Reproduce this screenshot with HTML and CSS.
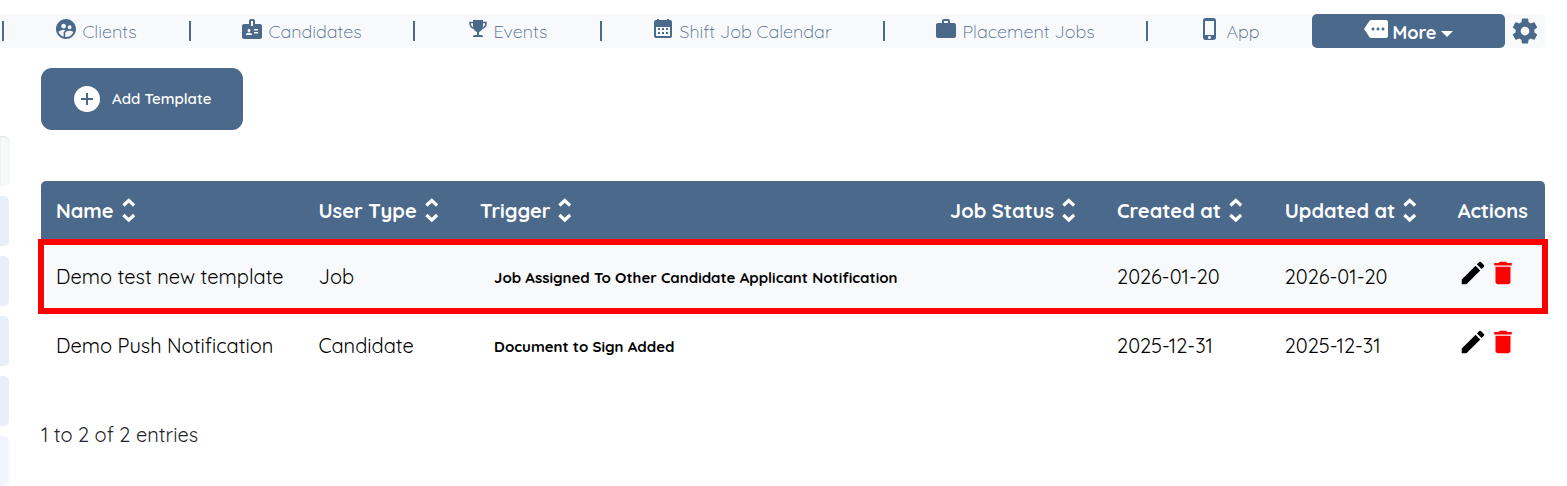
FILE: index.html
```
<!DOCTYPE html>
<html lang="en">
<head>
    <meta charset="UTF-8">
    <meta name="viewport" content="width=device-width, initial-scale=1.0">
    <title>Push Notification Templates</title>
    <link rel="stylesheet" href="styles.css">
</head>
<body>
    <!-- Shared icon shapes -->
    <svg class="icon-defs" aria-hidden="true">
        <symbol id="icon-sort" viewBox="0 0 24 24">
            <path d="M7.5 7.6L11.800 3.600l4.300 4M7.500 15.200l4.300 4 4.300-4" fill="none" stroke="currentColor" stroke-width="2.5"/>
        </symbol>
        <symbol id="icon-edit" viewBox="0 0 24 24">
            <path d="M3 17.25V21h3.75L17.81 9.94l-3.75-3.75L3 17.25zM20.71 7.04a1 1 0 0 0 0-1.41l-2.34-2.34a1 1 0 0 0-1.41 0l-1.83 1.83 3.75 3.75 1.83-1.83z"/>
        </symbol>
        <symbol id="icon-delete" viewBox="0 0 24 24">
            <path d="M6 19c0 1.1.9 2 2 2h8c1.1 0 2-.9 2-2V7H6v12zM19 4h-3.5l-1-1h-5l-1 1H5v2h14V4z"/>
        </symbol>
    </svg>

    <nav class="top-nav">
        <a class="nav-item" href="#">
            <svg class="nav-icon" viewBox="0 0 24 24"><path d="M11.99 2c-5.52 0-10 4.48-10 10s4.48 10 10 10 10-4.48 10-10-4.48-10-10-10zm3.61 6.34c1.07 0 1.93.86 1.93 1.93 0 1.07-.86 1.93-1.93 1.93-1.07 0-1.93-.86-1.93-1.93-.01-1.07.86-1.93 1.93-1.93zm-6-1.58c1.3 0 2.36 1.06 2.36 2.36 0 1.3-1.06 2.36-2.36 2.36s-2.36-1.06-2.36-2.36c0-1.31 1.05-2.36 2.36-2.36zm0 9.13v3.75c-2.4-.75-4.3-2.6-5.14-4.96 1.05-1.12 3.67-1.69 5.14-1.69.53 0 1.2.08 1.9.22-1.64.87-1.9 2.02-1.9 2.68zM11.99 20c-.27 0-.53-.01-.79-.04v-4.07c0-1.42 2.94-2.13 4.4-2.13 1.07 0 2.92.39 3.84 1.15-1.17 2.97-4.06 5.09-7.45 5.09z"/></svg>
            Clients
        </a>
        <a class="nav-item" href="#">
            <svg class="nav-icon" viewBox="0 0 24 24"><path d="M20 7h-5V4c0-1.1-.9-2-2-2h-2c-1.1 0-2 .9-2 2v3H4c-1.1 0-2 .9-2 2v11c0 1.1.9 2 2 2h16c1.1 0 2-.9 2-2V9c0-1.1-.9-2-2-2zM9 12c.83 0 1.5.67 1.5 1.5S9.83 15 9 15s-1.5-.67-1.5-1.5S8.17 12 9 12zm3 6H6v-.75c0-1 2-1.5 3-1.5s3 .5 3 1.5V18zm1-9h-2V4h2v5zm5 7.5h-4V15h4v1.5zm0-3h-4V12h4v1.5z"/></svg>
            Candidates
        </a>
        <a class="nav-item" href="#">
            <svg class="nav-icon" viewBox="0 0 24 24"><path d="M7 3h10v6c0 3.400-2 5.500-4 6v3h2.500a1.500 1.500 0 0 1 1.500 1.500v.5H7v-.5A1.500 1.500 0 0 1 8.500 18H11v-3c-2-.5-4-2.600-4-6z"/><path d="M7.500 5.500H4c0 3.500 1.500 5.500 4.500 6M16.500 5.500H20c0 3.500-1.500 5.500-4.500 6" fill="none" stroke="currentColor" stroke-width="1.600"/></svg>
            Events
        </a>
        <a class="nav-item" href="#">
            <svg class="nav-icon" viewBox="0 0 24 24"><path fill-rule="evenodd" d="M5 3h1V2h2v1h8V2h2v1h1a2 2 0 0 1 2 2v14a2 2 0 0 1-2 2H5a2 2 0 0 1-2-2V5a2 2 0 0 1 2-2zM5 10v9h14v-9z"/><path d="M7 11h2v2H7zM11 11h2v2h-2zM15 11h2v2h-2zM7 15h2v2H7zM11 15h2v2h-2zM15 15h2v2h-2z"/></svg>
            Shift Job Calendar
        </a>
        <a class="nav-item" href="#">
            <svg class="nav-icon" viewBox="0 0 24 24"><path d="M20 6h-4V4c0-1.110-.89-2-2-2h-4c-1.110 0-2 .89-2 2v2H4c-1.110 0-2 .89-2 2v11c0 1.110.89 2 2 2h16c1.110 0 2-.89 2-2V8c0-1.110-.89-2-2-2zm-6 0h-4V4h4v2z"/></svg>
            Placement Jobs
        </a>
        <a class="nav-item" href="#">
            <svg class="nav-icon" viewBox="0 0 24 24"><path d="M15.500 1h-8C6.120 1 5 2.120 5 3.500v17C5 21.880 6.120 23 7.500 23h8c1.380 0 2.500-1.120 2.500-2.500v-17C18 2.120 16.880 1 15.500 1zm-4 21c-.83 0-1.500-.67-1.500-1.500s.67-1.500 1.500-1.500 1.500.67 1.500 1.500-.67 1.500-1.500 1.500zm4.500-4H7V4h9v14z"/></svg>
            App
        </a>
        <button class="more-button" type="button">
            <svg class="nav-icon" viewBox="0 0 24 24"><path d="M22 3H7c-.69 0-1.230.35-1.590.88L0 12l5.410 8.110c.36.53.97.89 1.660.89H22c1.100 0 2-.9 2-2V5c0-1.100-.9-2-2-2zM9 13.500c-.83 0-1.500-.67-1.500-1.500s.67-1.500 1.500-1.500 1.500.67 1.500 1.500-.67 1.500-1.500 1.500zm5 0c-.83 0-1.500-.67-1.500-1.500s.67-1.500 1.500-1.500 1.500.67 1.500 1.500-.67 1.500-1.500 1.500zm5 0c-.83 0-1.500-.67-1.500-1.500s.67-1.500 1.500-1.500 1.500.67 1.500 1.500-.67 1.500-1.500 1.500z"/></svg>
            More
            <span class="caret"></span>
        </button>
        <a class="settings-link" href="#" aria-label="Settings">
            <svg viewBox="0 0 24 24"><path d="M12 15.5A3.5 3.5 0 0 1 8.5 12 3.5 3.5 0 0 1 12 8.5a3.5 3.5 0 0 1 3.5 3.5 3.5 3.5 0 0 1-3.5 3.5m7.43-2.53c.04-.32.07-.64.07-.97 0-.33-.03-.66-.07-1l2.11-1.63c.19-.15.24-.42.12-.64l-2-3.460c-.12-.22-.39-.31-.61-.22l-2.490 1c-.52-.39-1.060-.73-1.690-.98l-.37-2.650A.506.506 0 0 0 14 2h-4c-.25 0-.46.18-.5.42l-.37 2.650c-.63.25-1.170.59-1.690.98l-2.490-1c-.22-.09-.49 0-.61.22l-2 3.460c-.13.22-.07.49.12.64L4.570 11c-.04.34-.07.67-.07 1 0 .33.03.65.07.97l-2.110 1.660c-.19.15-.25.42-.12.64l2 3.460c.12.22.39.3.61.22l2.490-1.010c.52.4 1.060.74 1.690.99l.37 2.650c.04.24.25.42.5.42h4c.25 0 .46-.18.5-.42l.37-2.650c.63-.26 1.170-.59 1.690-.99l2.490 1.010c.22.08.49 0 .61-.22l2-3.460c.12-.22.07-.49-.12-.64l-2.110-1.660z"/></svg>
        </a>
    </nav>

    <div class="page">
        <aside class="sidebar">
            <div class="side-item search"></div>
            <div class="side-item"></div>
            <div class="side-item"></div>
            <div class="side-item"></div>
            <div class="side-item"></div>
            <div class="side-item active"></div>
        </aside>

        <main class="content">
            <button class="add-button" type="button">
                <svg viewBox="0 0 26 26"><circle cx="13" cy="13" r="13" fill="#fff"/><path d="M13 7v12M7 13h12" stroke="#4b698b" stroke-width="2"/></svg>
                Add Template
            </button>

            <table class="templates">
                <colgroup>
                    <col class="col-name">
                    <col class="col-type">
                    <col class="col-trigger">
                    <col class="col-status">
                    <col class="col-created">
                    <col class="col-updated">
                    <col class="col-actions">
                </colgroup>
                <thead>
                    <tr>
                        <th>Name<svg class="sort"><use href="#icon-sort"/></svg></th>
                        <th>User Type<svg class="sort"><use href="#icon-sort"/></svg></th>
                        <th>Trigger<svg class="sort"><use href="#icon-sort"/></svg></th>
                        <th>Job Status<svg class="sort"><use href="#icon-sort"/></svg></th>
                        <th>Created at<svg class="sort"><use href="#icon-sort"/></svg></th>
                        <th>Updated at<svg class="sort"><use href="#icon-sort"/></svg></th>
                        <th>Actions</th>
                    </tr>
                </thead>
                <tbody>
                    <tr class="highlighted">
                        <td>Demo test new template</td>
                        <td>Job</td>
                        <td><span class="trigger">Job Assigned To Other Candidate Applicant Notification</span></td>
                        <td></td>
                        <td>2026-01-20</td>
                        <td>2026-01-20</td>
                        <td>
                            <div class="actions">
                                <button class="edit" type="button" aria-label="Edit"><svg><use href="#icon-edit"/></svg></button>
                                <button class="delete" type="button" aria-label="Delete"><svg><use href="#icon-delete"/></svg></button>
                            </div>
                        </td>
                    </tr>
                    <tr>
                        <td>Demo Push Notification</td>
                        <td>Candidate</td>
                        <td><span class="trigger">Document to Sign Added</span></td>
                        <td></td>
                        <td>2025-12-31</td>
                        <td>2025-12-31</td>
                        <td>
                            <div class="actions">
                                <button class="edit" type="button" aria-label="Edit"><svg><use href="#icon-edit"/></svg></button>
                                <button class="delete" type="button" aria-label="Delete"><svg><use href="#icon-delete"/></svg></button>
                            </div>
                        </td>
                    </tr>
                </tbody>
            </table>

            <p class="entries">1 to 2 of 2 entries</p>
        </main>
    </div>
</body>
</html>
```
FILE: styles.css
```
* {
    box-sizing: border-box;
}

body {
    margin: 0;
    padding-top: 14px;
    background-color: #fff;
    color: #000;
    font-family: Quicksand, Lato, sans-serif;
    font-size: 20px;
    font-weight: 400;
    line-height: 24px;
}

button {
    border: none;
    padding: 0;
    font-family: inherit;
    cursor: pointer;
}

svg {
    fill: currentColor;
}

.icon-defs {
    display: none;
}

/* Top navigation */
.top-nav {
    display: grid;
    grid-template-columns: 187fr 224fr 187fr 283fr 263fr 166fr 193fr 40fr;
    margin-right: 22px;
    padding-left: 2px;
    background-color: #f8f9fb;
    border-radius: 0 5px 5px 0;
}

.nav-item {
    position: relative;
    display: flex;
    align-items: center;
    justify-content: center;
    gap: 4px;
    height: 34px;
    color: #4b698b;
    font-size: 18px;
    font-weight: 350;
    text-decoration: none;
    white-space: nowrap;
    padding-top: 2px;
}

/* Divider before each link */
.nav-item::before {
    content: "";
    position: absolute;
    left: 0;
    top: 7px;
    width: 2px;
    height: 20px;
    background-color: #4b698b;
}

.nav-icon {
    width: 24px;
    height: 24px;
    margin-bottom: 7px;
}

.more-button {
    display: flex;
    align-items: center;
    justify-content: center;
    gap: 4px;
    padding-top: 2px;
    background-color: #4b698b;
    color: #fff;
    border-radius: 5px;
    font-size: 18px;
    font-weight: 700;
}

.caret {
    border: 6px solid transparent;
    border-top-color: #fff;
    border-bottom: none;
    margin-top: 4px;
}

.settings-link {
    display: flex;
    align-items: center;
    justify-content: center;
    color: #4b698b;
}

.settings-link svg {
    width: 30px;
    height: 30px;
}

.page {
    display: flex;
    gap: 32px;
    padding-right: 22px;
}

/* Sidebar edge */
.sidebar {
    display: flex;
    flex-direction: column;
    flex: none;
    gap: 10px;
    width: 9px;
    padding-top: 88px;
}

.side-item {
    height: 50px;
    background-color: #e8effa;
    border-radius: 0 5px 5px 0;
}

.side-item.search {
    background-color: #f8f9fa;
    box-shadow: inset 0 1px 2px rgba(0, 0, 0, 0.1);
}

.side-item.active {
    background-color: #f2f5ff;
}

.content {
    flex: 1;
    min-width: 0;
    padding-top: 20px;
}

.add-button {
    display: flex;
    align-items: center;
    gap: 12px;
    padding: 18px 32px 18px 33px;
    background-color: #4b698b;
    color: #fff;
    border-radius: 11px;
    font-size: 15px;
    font-weight: 600;
    line-height: 26px;
}

.add-button svg {
    width: 26px;
    height: 26px;
}

/* Templates table */
.templates {
    width: 100%;
    margin-top: 51px;
    table-layout: fixed;
    border-collapse: separate;
    border-spacing: 0;
}

.col-name { width: 17.45%; }
.col-type { width: 10.75%; }
.col-trigger { width: 31.25%; }
.col-status { width: 11.1%; }
.col-created { width: 11.15%; }
.col-updated { width: 11.5%; }
.col-actions { width: 6.8%; }

.templates th {
    height: 61px;
    padding: 0 0 2px 15px;
    background-color: #4b698b;
    color: #fff;
    font-weight: 700;
    line-height: 30px;
    text-align: left;
    white-space: nowrap;
}

.templates th:first-child {
    border-top-left-radius: 5px;
}

.templates th:last-child {
    border-top-right-radius: 5px;
}

.templates td {
    height: 69px;
    padding: 0 0 0 15px;
    white-space: nowrap;
}

.highlighted td {
    background-color: #f8f9fb;
}

.highlighted {
    outline: 6px solid #f00;
    outline-offset: -3px;
}

.sort {
    width: 30px;
    height: 30px;
    vertical-align: top;
}

.trigger {
    display: block;
    padding: 2px 0 0 14px;
    font-size: 15px;
    font-weight: 700;
}

.actions {
    display: flex;
    padding-bottom: 8px;
}

.actions button {
    height: 30px;
    background: none;
}

.actions svg {
    display: block;
    width: 30px;
    height: 30px;
}

.actions .edit {
    color: #000;
}

.actions .delete {
    color: #f00;
}

.entries {
    margin: 43px 0 0;
    color: #212529;
}
```
